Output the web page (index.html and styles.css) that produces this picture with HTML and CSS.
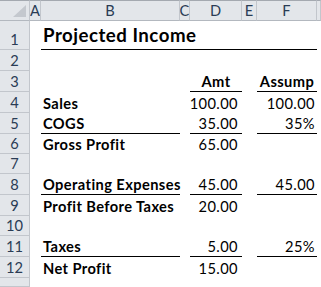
FILE: index.html
```html
<!DOCTYPE html>
<html>
<head>
<meta charset="utf-8">
<link rel="stylesheet" href="styles.css">
</head>
<body>
<div class="sheet">
  <div class="row hdr h21">
    <div class="corner"><svg width="29" height="20" viewBox="0 0 29 20"><polygon points="26,5 26,17 13,17" fill="#c4c8ce"/></svg></div>
    <div class="ch">A</div><div class="ch">B</div><div class="ch">C</div><div class="ch">D</div><div class="ch">E</div><div class="ch">F</div><div class="ch"></div>
  </div>
  <div class="row h29">
    <div class="rh">1</div><div class="c"></div><div class="c title ul">Projected Income</div><div class="c ul"></div><div class="c ul"></div><div class="c ul"></div><div class="c ul"></div><div class="c"></div>
  </div>
  <div class="row h21">
    <div class="rh">2</div><div class="c"></div><div class="c"></div><div class="c"></div><div class="c"></div><div class="c"></div><div class="c"></div><div class="c"></div>
  </div>
  <div class="row h21">
    <div class="rh">3</div><div class="c"></div><div class="c"></div><div class="c"></div><div class="c ctr b ul">Amt</div><div class="c"></div><div class="c ctr b ul">Assump</div><div class="c"></div>
  </div>
  <div class="row h21">
    <div class="rh">4</div><div class="c"></div><div class="c b">Sales</div><div class="c"></div><div class="c num d">100.00</div><div class="c"></div><div class="c num">100.00</div><div class="c"></div>
  </div>
  <div class="row h21">
    <div class="rh">5</div><div class="c"></div><div class="c b ul">COGS</div><div class="c"></div><div class="c num d ul">35.00</div><div class="c"></div><div class="c num ul">35%</div><div class="c"></div>
  </div>
  <div class="row h20">
    <div class="rh">6</div><div class="c"></div><div class="c b">Gross Profit</div><div class="c"></div><div class="c num d">65.00</div><div class="c"></div><div class="c num"></div><div class="c"></div>
  </div>
  <div class="row h20">
    <div class="rh">7</div><div class="c"></div><div class="c"></div><div class="c"></div><div class="c"></div><div class="c"></div><div class="c"></div><div class="c"></div>
  </div>
  <div class="row h21">
    <div class="rh">8</div><div class="c"></div><div class="c b ul">Operating Expenses</div><div class="c"></div><div class="c num d ul">45.00</div><div class="c"></div><div class="c num ul">45.00</div><div class="c"></div>
  </div>
  <div class="row h21">
    <div class="rh">9</div><div class="c"></div><div class="c b">Profit Before Taxes</div><div class="c"></div><div class="c num d">20.00</div><div class="c"></div><div class="c num"></div><div class="c"></div>
  </div>
  <div class="row h20">
    <div class="rh">10</div><div class="c"></div><div class="c"></div><div class="c"></div><div class="c"></div><div class="c"></div><div class="c"></div><div class="c"></div>
  </div>
  <div class="row h21">
    <div class="rh">11</div><div class="c"></div><div class="c b ul">Taxes</div><div class="c"></div><div class="c num d ul">5.00</div><div class="c"></div><div class="c num ul">25%</div><div class="c"></div>
  </div>
  <div class="row h21">
    <div class="rh">12</div><div class="c"></div><div class="c b">Net Profit</div><div class="c"></div><div class="c num d">15.00</div><div class="c"></div><div class="c num"></div><div class="c"></div>
  </div>
  <div class="row h9">
    <div class="rh"></div><div class="c"></div><div class="c"></div><div class="c"></div><div class="c"></div><div class="c"></div><div class="c"></div><div class="c"></div>
  </div>
</div>
</body>
</html>
```
FILE: styles.css
```css
html, body {
  margin: 0;
  padding: 0;
  background: #fff;
  overflow: hidden;
}
.sheet {
  width: 321px;
  font-family: Lato, "Liberation Sans", sans-serif;
  font-size: 14.67px;
  color: #000;
}
.row {
  display: grid;
  grid-template-columns: 30px 11px 139px 10px 52px 15px 60px 1fr;
}
.h21 { height: 21px; }
.h20 { height: 20px; }
.h29 { height: 29px; }
.h9 { height: 9px; }

.hdr > div {
  background: #e3e6ea;
  border-right: 1px solid #c2c6cc;
  border-bottom: 1px solid #b3b8bf;
  border-top: 1px solid #a4a9b0;
  box-sizing: border-box;
}
.corner svg { display: block; margin-top: -1px; }
.ch, .rh {
  display: flex;
  align-items: flex-end;
  justify-content: center;
  line-height: 15px;
  padding-bottom: 2px;
  color: #2a3c55;
  box-sizing: border-box;
  overflow: hidden;
}
.rh {
  background: #e3e6ea;
  border-right: 1px solid #c2c6cc;
  border-bottom: 1px solid #c2c6cc;
}
.c {
  display: flex;
  align-items: flex-end;
  padding: 0 2px 2px 2px;
  line-height: 15px;
  white-space: nowrap;
  box-sizing: border-box;
  min-width: 0;
  letter-spacing: 0.4px;
}
.b { font-weight: bold; }
.num { justify-content: flex-end; }
.d { padding-right: 4px; }
.ctr { justify-content: center; }
.ul { border-bottom: 1px solid #000; }
.title {
  font-size: 18.67px;
  font-weight: bold;
  line-height: 20px;
  padding-bottom: 4px;
  letter-spacing: 0.5px;
}
```
